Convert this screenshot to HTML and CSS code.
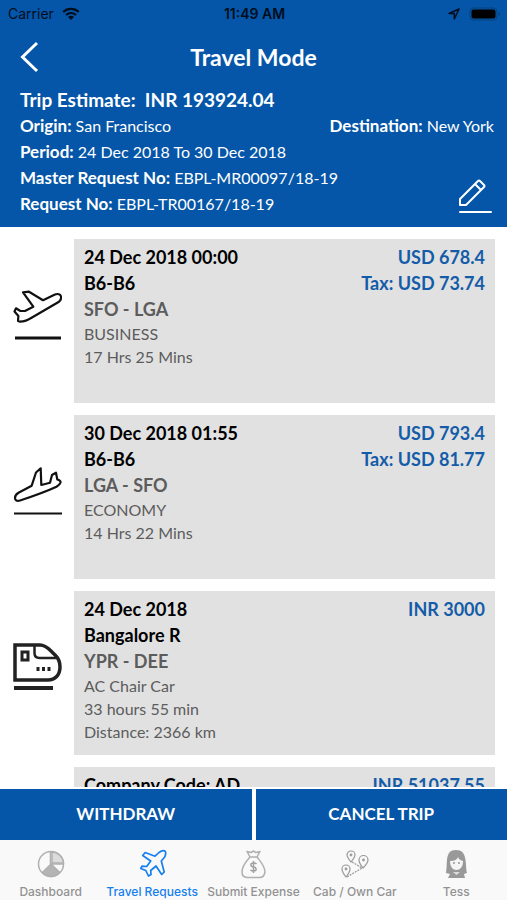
FILE: index.html
```html
<!DOCTYPE html>
<html lang="en">
<head>
<meta charset="utf-8">
<meta name="viewport" content="width=device-width, initial-scale=1">
<title>Travel Mode</title>
<link rel="stylesheet" href="styles.css">
</head>
<body>
<div class="app">
  <header class="header">
    <div class="status">
      <div class="status-left">Carrier
        <svg width="18" height="14" viewBox="0 0 18 14" fill="none" stroke="#000d1c" stroke-width="2.2"><path d="M1.200 5C5.600 .9 12.400 .9 16.800 5M4 8c3-2.700 7-2.700 10 0"/><path d="M9 13 6 9.900c1.800-1.400 4.200-1.400 6 0z" fill="#000d1c" stroke="none"/></svg>
      </div>
      <div class="status-time">11:49 AM</div>
      <div class="status-right">
        <svg width="14" height="14" viewBox="0 0 14 14" fill="none" stroke="#000d1c" stroke-width="1.500" stroke-linejoin="round"><path d="M12 2 2 6.500h5.300v5.500z"/></svg>
        <svg width="32" height="14" viewBox="0 0 32 14"><rect x="1" y="1" width="27" height="12" rx="3.500" fill="none" stroke="#02407f"/><rect x="2.500" y="2.500" width="24" height="9" rx="2" fill="#000"/><path d="M29.500 5v4c2-.8 2-3.200 0-4z" fill="#02407f"/></svg>
      </div>
    </div>
    <div class="titlebar">
      <button class="back" aria-label="Back"><svg width="20" height="32" viewBox="0 0 20 32" fill="none" stroke="#fff" stroke-width="3"><path d="M17 2 2.500 16 17 30"/></svg></button>
      <h1>Travel Mode</h1>
    </div>
    <div class="summary">
      <p class="estimate">Trip Estimate: &nbsp;INR 193924.04</p>
      <div class="route"><p><b>Origin:</b> San Francisco</p><p><b>Destination:</b> New York</p></div>
      <p><b>Period:</b> 24 Dec 2018 To 30 Dec 2018</p>
      <p><b>Master Request No:</b> EBPL-MR00097/18-19</p>
      <p><b>Request No:</b> EBPL-TR00167/18-19</p>
      <button class="edit" aria-label="Edit"><svg width="36" height="36" viewBox="0 0 36 36" fill="none" stroke="#fff" stroke-width="2" stroke-linejoin="round" stroke-linecap="round"><path d="M2 20 20 2q1-1 2 0l4 4q1 1 0 2L8 26H2zM17 5l6 6M2 33h31"/></svg></button>
    </div>
  </header>

  <main class="list">
    <article class="trip">
      <svg class="mode" width="50" height="64" viewBox="0 0 50 64" fill="none" stroke="#111" stroke-width="2.200" stroke-linejoin="round"><path d="M21.300 17.700 11 3.300l6-.6 14 8.500L43 5.500c3-1.200 5.500 0 6 2 .4 2-.5 4-2 5.200L20 28.500c-4 2.500-8 4-12 4.200l-2-.7.400-5L2.500 22.500 4 19.300l4 2.500 5 .2z"/><path d="M3 49h46" stroke-width="3"/></svg>
      <div class="card"><div class="info"><h2>24 Dec 2018 00:00</h2><h2>B6-B6</h2><h3>SFO - LGA</h3><p>BUSINESS</p><p>17 Hrs 25 Mins</p></div><div class="price"><span>USD 678.4</span><span>Tax: USD 73.74</span></div></div>
    </article>
    <article class="trip">
      <svg class="mode" width="50" height="64" viewBox="0 0 50 64" fill="none" stroke="#111" stroke-width="2.200" stroke-linejoin="round"><path d="M19.700 20.700 24 7.500l4.700-4.200.6 16.700 8.700-2.200L40 10l4-2.300 1.300 6.800c2 .5 3.500 1.500 3.200 3-.4 1.700-2 3-4 4.200C33 27 20 31.500 8 35.500c-3 1-5 0-5-2.500s1.500-4 3.500-5.200z"/><path d="M2 48.500h48"/></svg>
      <div class="card"><div class="info"><h2>30 Dec 2018 01:55</h2><h2>B6-B6</h2><h3>LGA - SFO</h3><p>ECONOMY</p><p>14 Hrs 22 Mins</p></div><div class="price"><span>USD 793.4</span><span>Tax: USD 81.77</span></div></div>
    </article>
    <article class="trip">
      <svg class="mode" width="50" height="64" viewBox="0 0 50 64" fill="none" stroke="#222" stroke-width="3.500"><path d="M3 4h25c5 0 8 3 11 6l5 5c3 3 4 7 4 11 0 8-5 13-12 13H3z"/><path d="M22.500 4v8q0 5 5 5H45" stroke-width="2.500"/><path d="M2 47h39" stroke-width="4"/><path d="M10 11h6v8h-6z" stroke-width="3"/><path d="M24.500 28h14" stroke-dasharray="3 2.500" stroke-width="4"/></svg>
      <div class="card"><div class="info"><h2>24 Dec 2018</h2><h2>Bangalore R</h2><h3>YPR - DEE</h3><p>AC Chair Car</p><p>33 hours 55 min</p><p>Distance: 2366 km</p></div><div class="price"><span>INR 3000</span></div></div>
    </article>
    <article class="trip">
      <div class="mode"></div>
      <div class="card"><div class="info"><h2>Company Code: AD</h2></div><div class="price"><span>INR 51037.55</span></div></div>
    </article>
  </main>

  <div class="actions"><button>WITHDRAW</button><button>CANCEL TRIP</button></div>

  <nav class="tabs">
    <a href="#dashboard"><svg width="30" height="30" viewBox="0 0 30 30" fill="none" stroke="#b0b0b0" stroke-width="1.500"><circle cx="15" cy="15" r="12.500"/><path d="M16 3v11h11.500A12 12 0 0 0 16 3z" fill="#dcdcdc"/><path d="M15 15 6.500 23.500q8.500 8 17 0z" fill="#b4b4b4"/><path d="M14.500 3v12l9 8.500M15 15h12"/></svg>Dashboard</a>
    <a class="active" href="#travel"><svg width="30" height="30" viewBox="0 0 30 30" fill="none" stroke="#167ff0" stroke-width="1.700" stroke-linejoin="round"><path d="M18 7.200 22 3.500c2-1.500 5-2 6.200-1.300.8 1 .6 4-.7 6L24.300 12l2.900 11-2.500 2.500L19 17l-5.300 4.500.3 4-2.500 1.500-2.700-5.500-5-2L5 17.200l4.700.3 4-5.500-8-5.500 2.500-3z"/></svg>Travel Requests</a>
    <a href="#expense"><svg width="30" height="30" viewBox="0 0 30 30" fill="none" stroke="#b0b0b0" stroke-width="1.500" stroke-linejoin="round"><path d="M12 8 9 2.500l4 1 2.500-1.500L18 3.500l4-1L19 8c3 4 8 9 8 15q-1 5.500-5 5.500H9Q4 28 4 23C4 16 9 12 12 8zM11 8h9"/><path d="M18.500 15q-1-1-3-1c-4 0-3 4 0 4s4 4 0 4q-2 0-3-1M15.500 12v12" stroke="#a0a0a0"/></svg>Submit Expense</a>
    <a href="#cab"><svg width="30" height="30" viewBox="0 0 30 30" fill="none" stroke="#999" stroke-width="1.200"><path d="M11 13Q7 8 7 6a4 4 0 0 1 8 0q0 2-4 7zM23 19q-4-5-4-8a4 4 0 0 1 9 0q0 3-5 8zM6 28q-4-5-4-8a4 4 0 0 1 8 0q0 3-4 8z"/><circle cx="11" cy="6" r=".8"/><circle cx="23.500" cy="11" r=".8"/><circle cx="6" cy="20" r=".8"/><path d="m12 13 10 6L7 28" stroke-dasharray="2 1"/></svg>Cab / Own Car</a>
    <a href="#profile"><svg width="30" height="30" viewBox="0 0 30 30"><path d="M5 24C7 15 3 1 15 1s9 14 11 23l-3 1 1 4H7l2-4z" fill="#999"/><path d="M9 12q7 0 8-4 1 3 5 4c0 6-3 9-6.500 9S9 18 9 12z" fill="#f5f5f5"/><path d="m12 23 3.500 3 3.500-3" fill="#ddd"/><circle cx="13" cy="14" r="1" fill="#999"/><circle cx="18" cy="14" r="1" fill="#999"/></svg>Tess</a>
  </nav>
</div>
</body>
</html>
```
FILE: styles.css
```css
* { box-sizing: border-box; }
body, h1, h2, h3, p { margin: 0; }
body { background: #fff; font-family: Lato, "Liberation Sans", sans-serif; }
button { border: 0; padding: 0; background: none; color: inherit; font: inherit; cursor: pointer; }
svg { display: block; flex: none; }

.app { display: flex; flex-direction: column; height: 100vh; }

.header { background: #0556a8; color: #fff; }
.status { display: grid; grid-template-columns: 1fr auto 1fr; align-items: center; height: 28px; padding: 0 6px 0 8px; color: #000d1c; font: 14px/28px Inter, sans-serif; }
.status-left, .status-right { display: flex; align-items: center; gap: 8px; }
.status-right { justify-content: flex-end; }
.status-time { font-weight: 600; }

.titlebar { display: grid; grid-template-columns: 1fr auto 1fr; align-items: center; height: 58px; padding: 0 20px; }
h1 { font-size: 23px; line-height: 28px; }

.summary { position: relative; padding: 1px 13px 10px 20px; font-size: 16px; line-height: 26px; }
.summary b { font-size: 17px; line-height: 20px; }
.summary .estimate { font-size: 19px; font-weight: 700; }
.route { display: flex; justify-content: space-between; }
.edit { position: absolute; right: 13px; bottom: 12px; }

.list { flex: 1; min-height: 0; overflow: hidden; padding: 12px 12px 0; margin-bottom: 2px; }
.trip { display: flex; align-items: center; gap: 12px; margin-bottom: 12px; }
.mode { width: 50px; }
.card { flex: 1; display: flex; justify-content: space-between; min-height: 164px; padding: 5px 10px; background: #e1e1e1; }
h2, h3, .price { font-size: 18px; font-weight: 700; line-height: 26px; }
h2 { color: #000; }
h3 { color: #5c5c5c; }
.info p { color: #5c5c5c; font-size: 16px; line-height: 23px; }
.price { display: flex; flex-direction: column; align-items: flex-end; color: #145ca8; }

.actions { display: grid; grid-template-columns: 1fr 1fr; gap: 4px; }
.actions button { height: 51px; padding-bottom: 3px; background: #0556a8; color: #fff; font-size: 17px; font-weight: 700; }

.tabs { display: grid; grid-template-columns: repeat(5, 1fr); height: 60px; background: #f9f9f9; }
.tabs a { display: flex; flex-direction: column; align-items: center; gap: 5px; padding-top: 9px; color: #929292; font: 500 12px/16px Inter, sans-serif; text-decoration: none; white-space: nowrap; }
.tabs .active { color: #167ff0; }
```
